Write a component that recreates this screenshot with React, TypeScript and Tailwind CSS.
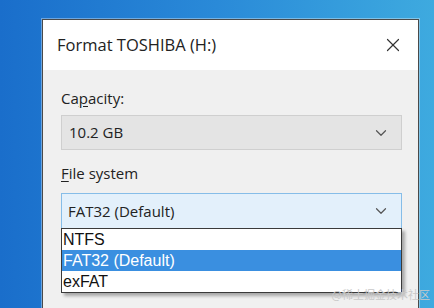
import { ChevronDown, X } from 'lucide-react';

const ui = { fontFamily: '"Open Sans", "Noto Sans", sans-serif' };
const list = { fontFamily: '"Liberation Sans", Arial, sans-serif' };

const options = [
  { label: 'NTFS', active: false },
  { label: 'FAT32 (Default)', active: true },
  { label: 'exFAT', active: false },
];

export default function App() {
  return (
    <div className="relative h-[308px] w-[434px] overflow-hidden bg-gradient-to-r from-[#1a6ecb] via-[#2a8ad8] to-[#3eaadf] pt-[19px] pl-[42px]">
      {/* Dialog */}
      <div className="h-[300px] w-[377px] border border-[#4a4a4a] bg-[#f0f0f0] shadow-[0_0_0_1px_rgba(255,255,255,0.35)]" style={ui}>
        {/* Title bar */}
        <div className="flex h-[50px] items-center justify-between bg-white pl-[14px] pr-[14px]">
          <span className="text-[16.5px] text-[#222]">Format TOSHIBA (H:)</span>
          <X className="h-[22px] w-[22px] text-[#333]" strokeWidth={1.3} />
        </div>

        {/* Body */}
        <div className="px-[18px] pt-[18px]">
          <div className="text-[15px] leading-[20px] text-[#222]">
            Ca<span className="underline underline-offset-2">p</span>acity:
          </div>
          <div className="mt-[7px] flex h-[35px] w-[341px] items-center justify-between border border-[#cfcfcf] bg-[#e4e4e4] pl-[7px] pr-[11px]">
            <span className="text-[15px] text-[#222]">10.2 GB</span>
            <ChevronDown className="h-[18px] w-[18px] text-[#555]" strokeWidth={1.6} />
          </div>

          <div className="mt-[13px] text-[15px] leading-[20px] text-[#222]">
            <span className="underline underline-offset-2">F</span>ile system
          </div>

          <div className="relative mt-[10px] w-[341px]">
            <div className="flex h-[35px] items-center justify-between border border-[#86bde8] border-b-0 bg-[#e3f0fb] pl-[6px] pr-[11px]">
              <span className="text-[15px] text-[#222]">FAT32 (Default)</span>
              <ChevronDown className="h-[18px] w-[18px] text-[#555]" strokeWidth={1.6} />
            </div>
            {/* Open list */}
            <div className="border border-[#3a3a3a] bg-white shadow-[3px_3px_3px_rgba(0,0,0,0.3)]" style={list}>
              {options.map((o) => (
                <div
                  key={o.label}
                  className={
                    o.active
                      ? 'h-[21px] bg-[#3a8fe0] pl-[1px] text-[16px] leading-[21px] text-white'
                      : 'h-[21px] pl-[1px] text-[16px] leading-[21px] text-[#111]'
                  }
                >
                  {o.label}
                </div>
              ))}
            </div>
          </div>
        </div>
      </div>

      {/* Watermark */}
      <div
        className="absolute bottom-[6px] right-[4px] text-[11px] text-[#c9c9c9]"
        style={{ fontFamily: '"Noto Sans CJK SC", sans-serif' }}
      >
        @稀土掘金技术社区
      </div>
    </div>
  );
}
